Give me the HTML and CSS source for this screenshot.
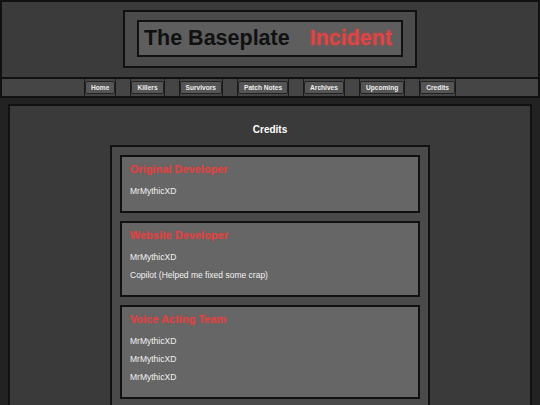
FILE: index.html
```html
<!DOCTYPE html>
<html lang="en">

<head>
    <meta charset="UTF-8">
    <meta name="viewport" content="width=device-width, initial-scale=1.0">
    <title>Credits - The Baseplate Incident</title>
    <link rel="stylesheet" href="styles.css">
</head>

<body>
    <header>
        <div class="title-outer">
            <div class="title-inner">
                <h1>The Baseplate <span class="red">Incident</span></h1>
            </div>
        </div>
    </header>
    <nav>
        <ul>
            <li><a href="#">Home</a></li>
            <li><a href="#">Killers</a></li>
            <li><a href="#">Survivors</a></li>
            <li><a href="#">Patch Notes</a></li>
            <li><a href="#">Archives</a></li>
            <li><a href="#">Upcoming</a></li>
            <li><a href="#">Credits</a></li>
        </ul>
    </nav>
    <main>
        <h2 class="page-title">Credits</h2>
        <div class="credits">
            <div class="card">
                <h3>Original Developer</h3>
                <p>MrMythicXD</p>
            </div>
            <div class="card">
                <h3>Website Developer</h3>
                <p>MrMythicXD</p>
                <p>Copilot (Helped me fixed some crap)</p>
            </div>
            <div class="card">
                <h3>Voice Acting Team</h3>
                <p>MrMythicXD</p>
                <p>MrMythicXD</p>
                <p>MrMythicXD</p>
            </div>
        </div>
    </main>
</body>

</html>
```

FILE: styles.css
```css
* {
    box-sizing: border-box;
}

body {
    margin: 0;
    background-color: #222;
    font-family: "Liberation Sans", Arial, sans-serif;
    color: #fff;
}

header {
    background-color: #3b3b3b;
    border: 2px solid #111;
    padding: 8px 0 9px;
    display: flex;
    justify-content: center;
}

.title-outer {
    background-color: #4b4b4b;
    border: 2px solid #111;
    padding: 8px 12px 9px;
}

.title-inner {
    background-color: #5e5e5e;
    border: 2px solid #111;
    height: 37px;
    padding: 0 9px 0 5px;
    display: flex;
    align-items: center;
}

.title-inner h1 {
    margin: 0;
    font-size: 21.5px;
    font-weight: bold;
    color: #111;
    white-space: nowrap;
}

.red {
    color: #dc4646;
    margin-left: 14px;
    text-shadow: 0 0 3px rgba(230, 60, 60, 0.6);
}

nav {
    background-color: #454545;
    border: 2px solid #111;
    border-top: none;
}

nav ul {
    list-style: none;
    margin: 0;
    padding: 0;
    height: 17px;
    display: flex;
    justify-content: center;
    gap: 14px;
}

nav li {
    display: flex;
    align-items: center;
    border-left: 1px solid #1a1a1a;
    border-right: 1px solid #1a1a1a;
}

nav a {
    display: block;
    background-color: #555;
    color: #eee;
    font-size: 6.6px;
    font-weight: bold;
    line-height: 11px;
    padding: 0 5px;
    border: 1px solid #222;
    border-radius: 2px;
    text-decoration: none;
}

main {
    margin: 6px 8px 0;
    background-color: #3a3a3a;
    border: 2px solid #111;
    border-bottom: none;
    padding: 18px 0 20px;
    min-height: 320px;
}

.page-title {
    margin: 0 0 9px;
    text-align: center;
    font-size: 10px;
    line-height: 12px;
    font-weight: bold;
}

.credits {
    width: 320px;
    margin: 0 auto;
    background-color: #4a4a4a;
    border: 2px solid #111;
    padding: 8px;
    display: flex;
    flex-direction: column;
    gap: 8.5px;
}

.card {
    background-color: #666;
    border: 2px solid #111;
    padding: 5px 8px 14px;
}

.card h3 {
    margin: 0 0 8.5px;
    font-size: 11px;
    line-height: 14px;
    font-weight: bold;
    color: #dc4646;
    text-shadow: 0 0 2px rgba(230, 60, 60, 0.5);
}

.card p {
    margin: 6.2px 0 0;
    font-size: 8.5px;
    line-height: 12px;
    color: #f2f2f2;
}

.card h3 + p {
    margin-top: 0;
}
```
